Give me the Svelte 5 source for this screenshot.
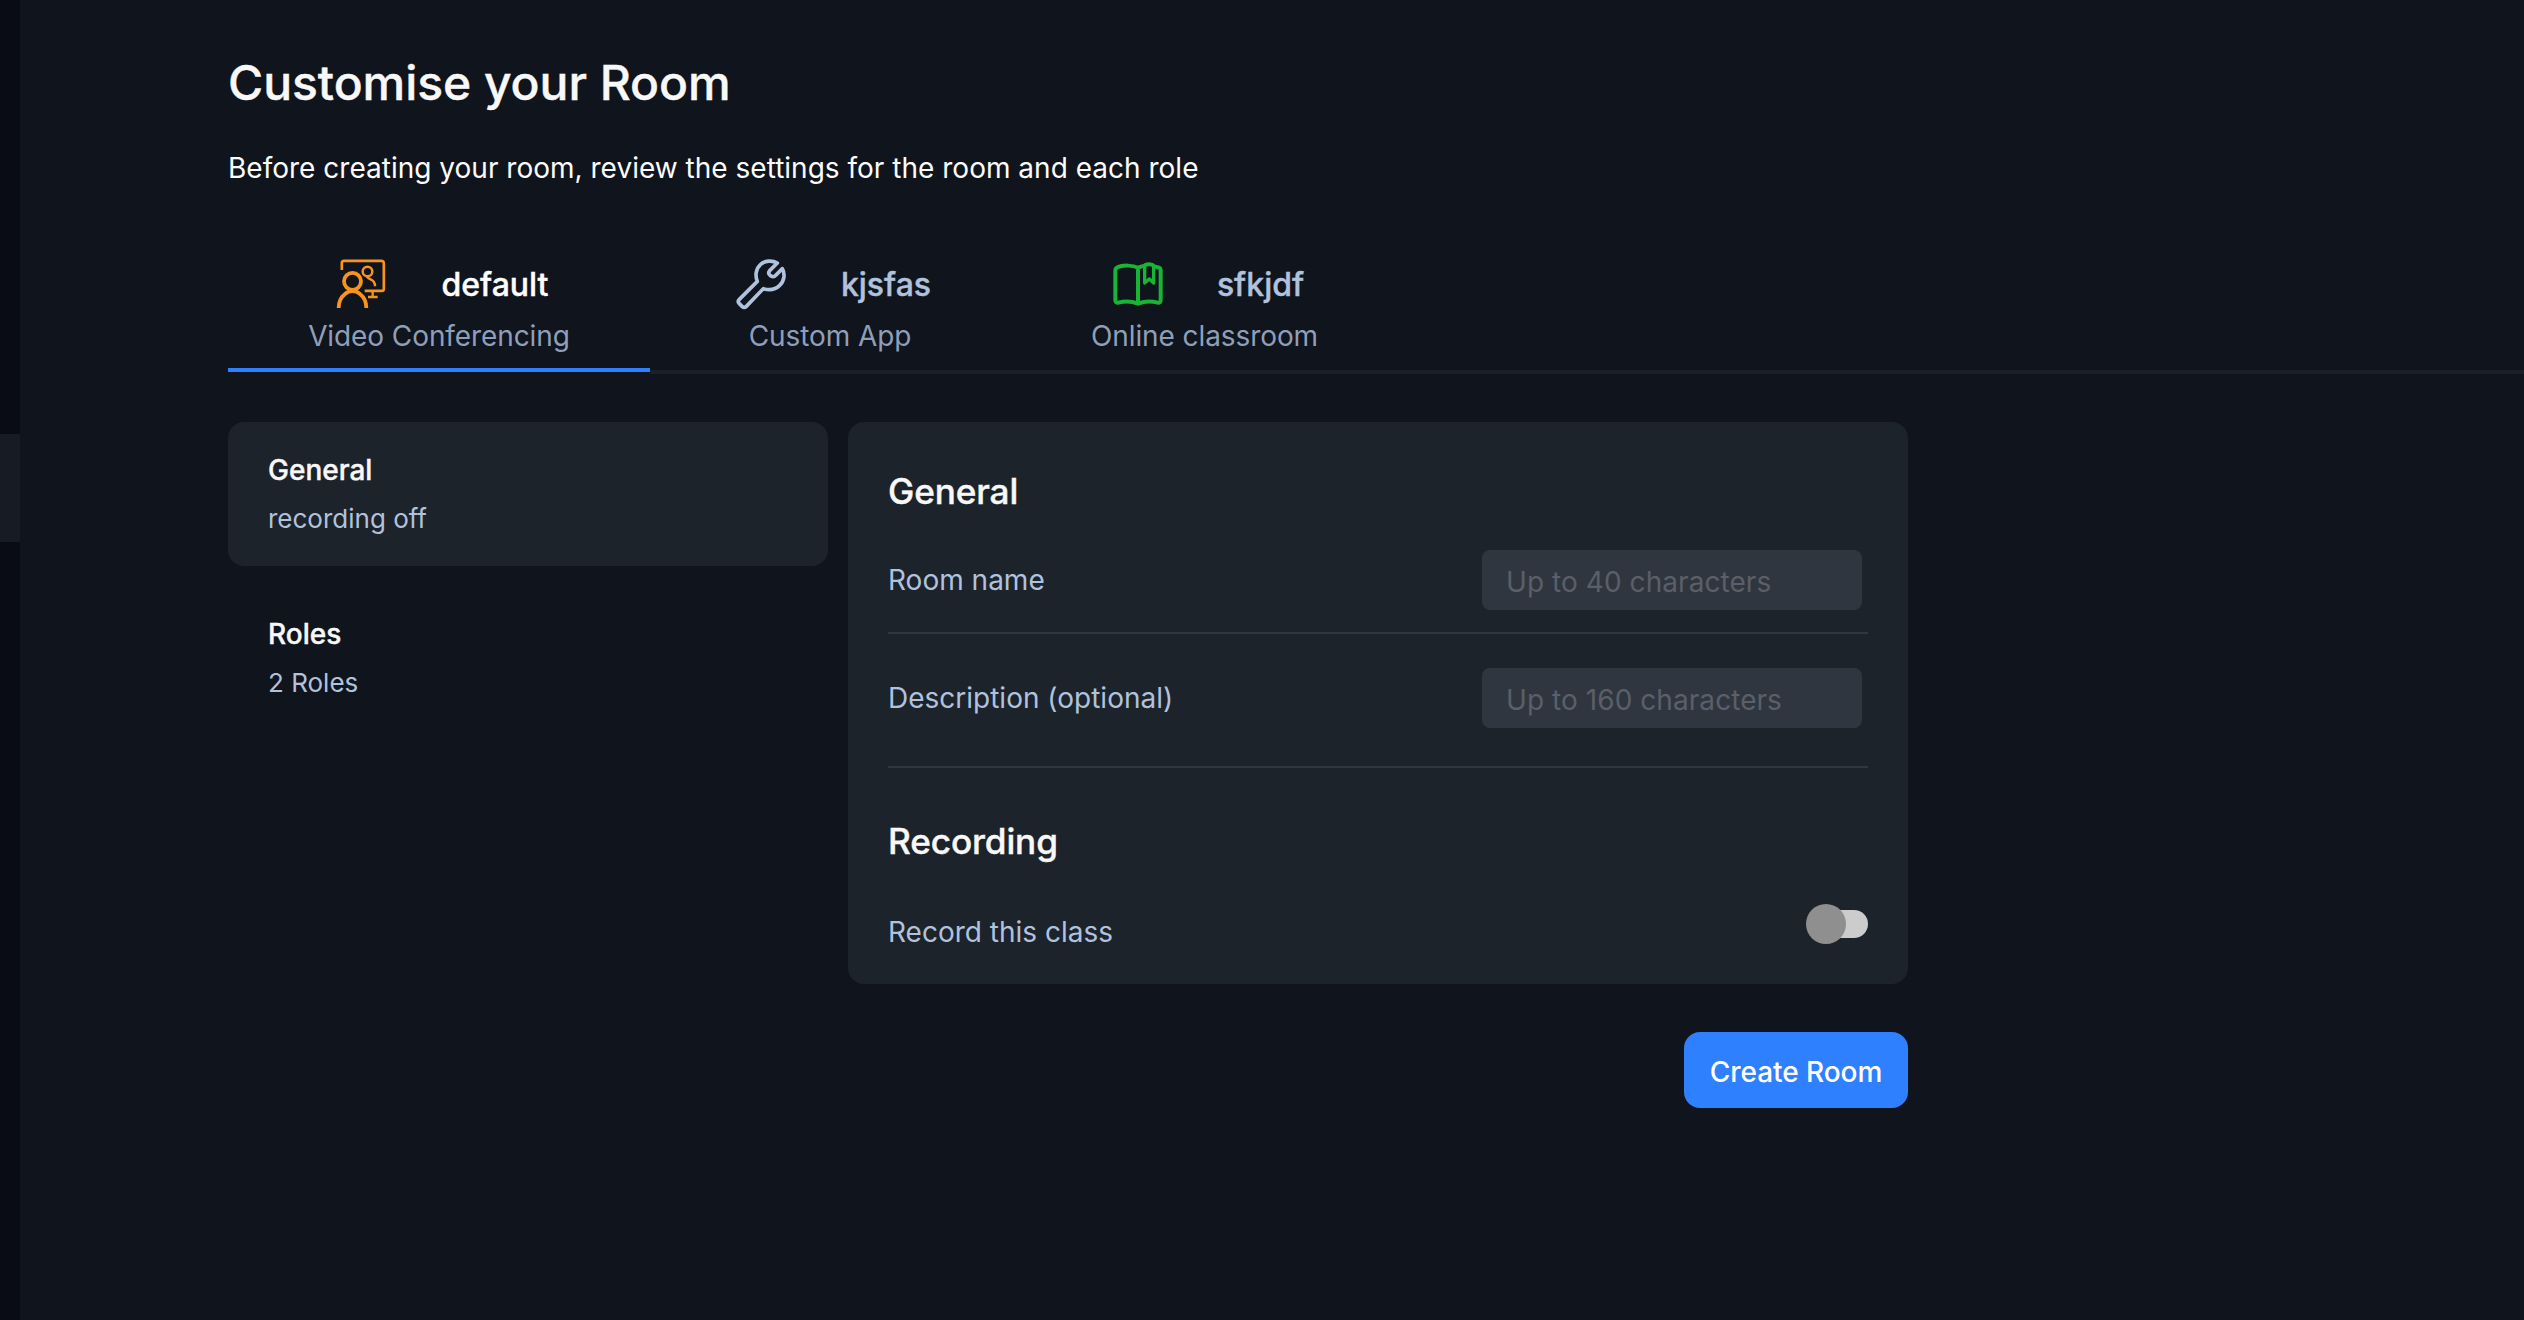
<script>
  const sections = [
    { title: 'General', note: 'recording off', active: true },
    { title: 'Roles', note: '2 Roles', active: false }
  ];
</script>

{#snippet conferenceIcon()}
  <svg class="icon orange" viewBox="30 36 192 192">
    <path stroke-width="8" d="M68.500 90V69Q68.500 62.500 75 62.500H187Q194.500 62.500 194.500 70V146Q194.500 152.500 188 152.500H137" />
    <path stroke-width="7" d="M161 153V170M147 171H176" />
    <circle stroke-width="7.5" cx="145.500" cy="94.500" r="14.500" />
    <path stroke-width="7.5" d="M143 109Q148 116 156 119Q168 124 168 139" />
    <circle stroke-width="11.500" cx="100.500" cy="124" r="25.500" />
    <path stroke-width="11.500" d="M59 204Q59 177 78 162Q88 153.500 100.500 153.500Q113 153.500 123 162Q142 177 142 204" />
  </svg>
{/snippet}

{#snippet wrenchIcon()}
  <svg class="icon pale" viewBox="29 36 192 192">
    <path stroke-width="11" d="M174 69C158 60 137 62 124 73C109 86 107 107 114 124L60 178C56 182 56 187 60 191L68 199C72 203 77 203 81 199L132 146C149 151 168 149 181 136C195 123 198 102 189 86L169 106C164 112 158 110 153 107C148 103 147 97 151 92Z" />
  </svg>
{/snippet}

{#snippet bookIcon()}
  <svg class="icon green" viewBox="45 36 192 192">
    <path stroke-width="12" d="M144 83C130 76 98 74 82 82Q76 85 76 92V180Q76 189 85 188C103 183 127 184 144 191C161 184 185 183 203 188Q212 189 212 180V92Q212 85 207 83L193 79C186 71 169 71 162 78Q152 79 144 83ZM144 83V191" />
    <path stroke-width="10" d="M164 79V129L178 117L191 129V80" />
  </svg>
{/snippet}

<div class="app">
  <aside><div class="rail-item"></div></aside>
  <main>
    <h1>Customise your Room</h1>
    <p class="intro">Before creating your room, review the settings for the room and each role</p>

    <nav>
      <div class="tab first active">
        <div class="tab-head">{@render conferenceIcon()}<span>default</span></div>
        <div class="caption">Video Conferencing</div>
      </div>
      <div class="tab second">
        <div class="tab-head">{@render wrenchIcon()}<span>kjsfas</span></div>
        <div class="caption">Custom App</div>
      </div>
      <div class="tab third">
        <div class="tab-head">{@render bookIcon()}<span>sfkjdf</span></div>
        <div class="caption">Online classroom</div>
      </div>
      <div class="tab filler"></div>
    </nav>

    <div class="content">
      <div class="sections">
        {#each sections as s}
          <div class="section" class:selected={s.active}>
            <div class="section-title">{s.title}</div>
            <div class="section-note">{s.note}</div>
          </div>
        {/each}
      </div>

      <div class="right">
        <div class="panel">
          <h2>General</h2>
          <div class="field name">
            <label for="room">Room name</label>
            <input id="room" placeholder="Up to 40 characters" />
          </div>
          <div class="field desc">
            <label for="desc">Description (optional)</label>
            <input id="desc" placeholder="Up to 160 characters" />
          </div>
          <h2 class="recording">Recording</h2>
          <div class="record">
            <span>Record this class</span>
            <div class="switch"><i class="knob"></i><i class="track"></i></div>
          </div>
        </div>
        <button>Create Room</button>
      </div>
    </div>
  </main>
</div>

<style>
  :global(body) { background: #10141c; }
  .app {
    display: flex;
    width: 100%;
    height: 1320px;
    overflow: hidden;
    background: #10141c;
    color: #f8f8f8;
    font: 400 28px/40px Inter, sans-serif;
  }
  aside { flex: none; width: 20px; background: #090c14; padding-top: 434px; box-sizing: border-box; }
  .rail-item { height: 108px; background: #171b23; }
  main { flex: 1; min-width: 0; padding: 53px 0 0 208px; }
  h1, h2, .tab-head span, .section-title { -webkit-text-stroke: 0.4px currentColor; }
  h1 { margin: 0; font-size: 48px; line-height: 60px; font-weight: 500; letter-spacing: -0.04px; }
  .intro { margin: 35px 0 0; white-space: nowrap; color: #fcfcfc; letter-spacing: 0.01px; }

  nav { display: flex; height: 122px; margin-top: 64px; }
  .tab {
    display: flex;
    flex-direction: column;
    align-items: center;
    box-sizing: border-box;
    height: 122px;
    border-bottom: 4px solid #1b1f27;
    color: #b0c2dd;
  }
  .tab.active { height: 120px; border-color: #2f80ff; color: #fff; }
  .first { width: 422px; }
  .second { width: 360px; }
  .third { width: 389px; }
  .filler { flex: 1; }
  .tab-head { display: flex; align-items: center; gap: 48px; font-size: 32px; font-weight: 500; }
  .tab-head span { padding-top: 2px; }
  .caption { line-height: 36px; margin-top: 2px; color: #8f9fb9; letter-spacing: -0.09px; }
  .icon { width: 64px; height: 64px; fill: none; stroke: currentColor; stroke-linejoin: round; stroke-linecap: butt; }
  .orange { color: #f7931e; }
  .pale { color: #b0c2dd; }
  .green { color: #18b436; }

  .content { display: flex; gap: 20px; margin-top: 48px; }
  .sections { width: 600px; display: flex; flex-direction: column; gap: 20px; }
  .section { box-sizing: border-box; height: 144px; padding: 30px 40px; border-radius: 16px; line-height: 36px; }
  .section.selected { background: #1d232a; }
  .section-title { font-weight: 500; }
  .section-note { margin-top: 13px; font-size: 26px; color: #b0c2dd; }

  .right { width: 1060px; display: flex; flex-direction: column; align-items: flex-end; }
  .panel { box-sizing: border-box; width: 100%; height: 562px; padding: 47px 40px 0; border-radius: 16px; background: #1d232a; }
  h2 { margin: 0; font-size: 35.2px; line-height: 44px; font-weight: 500; letter-spacing: -0.14px; }
  .field { display: flex; justify-content: space-between; align-items: center; padding-right: 6px; border-bottom: 2px solid #303740; }
  .name { padding-top: 37px; padding-bottom: 22px; }
  .desc { padding-top: 34px; padding-bottom: 38px; }
  label, .record { color: #b0c2dd; }
  input {
    box-sizing: border-box;
    width: 380px;
    height: 60px;
    padding: 4px 24px 0;
    border: 0;
    border-radius: 8px;
    background: #303640;
    color: #fff;
    font: inherit;
    letter-spacing: 0.06px;
  }
  input::placeholder { color: #5a5f68; opacity: 1; }
  .recording { margin-top: 51px; }
  .record { display: flex; justify-content: space-between; align-items: flex-start; margin-top: 41px; }
  .record span { padding-top: 8px; }
  .switch { display: flex; align-items: center; height: 40px; width: 62px; }
  .knob { flex: none; width: 40px; height: 40px; border-radius: 50%; background: #8f8f8f; z-index: 1; }
  .track { flex: none; width: 60px; height: 28px; margin-left: -38px; border-radius: 14px; background: #ccc; }
  button {
    width: 224px;
    height: 76px;
    margin-top: 48px;
    padding: 4px 0 0;
    border: 0;
    border-radius: 16px;
    background: #2f80ff;
    color: #fff;
    font: inherit;
    font-weight: 500;
    letter-spacing: -0.06px;
  }
</style>
